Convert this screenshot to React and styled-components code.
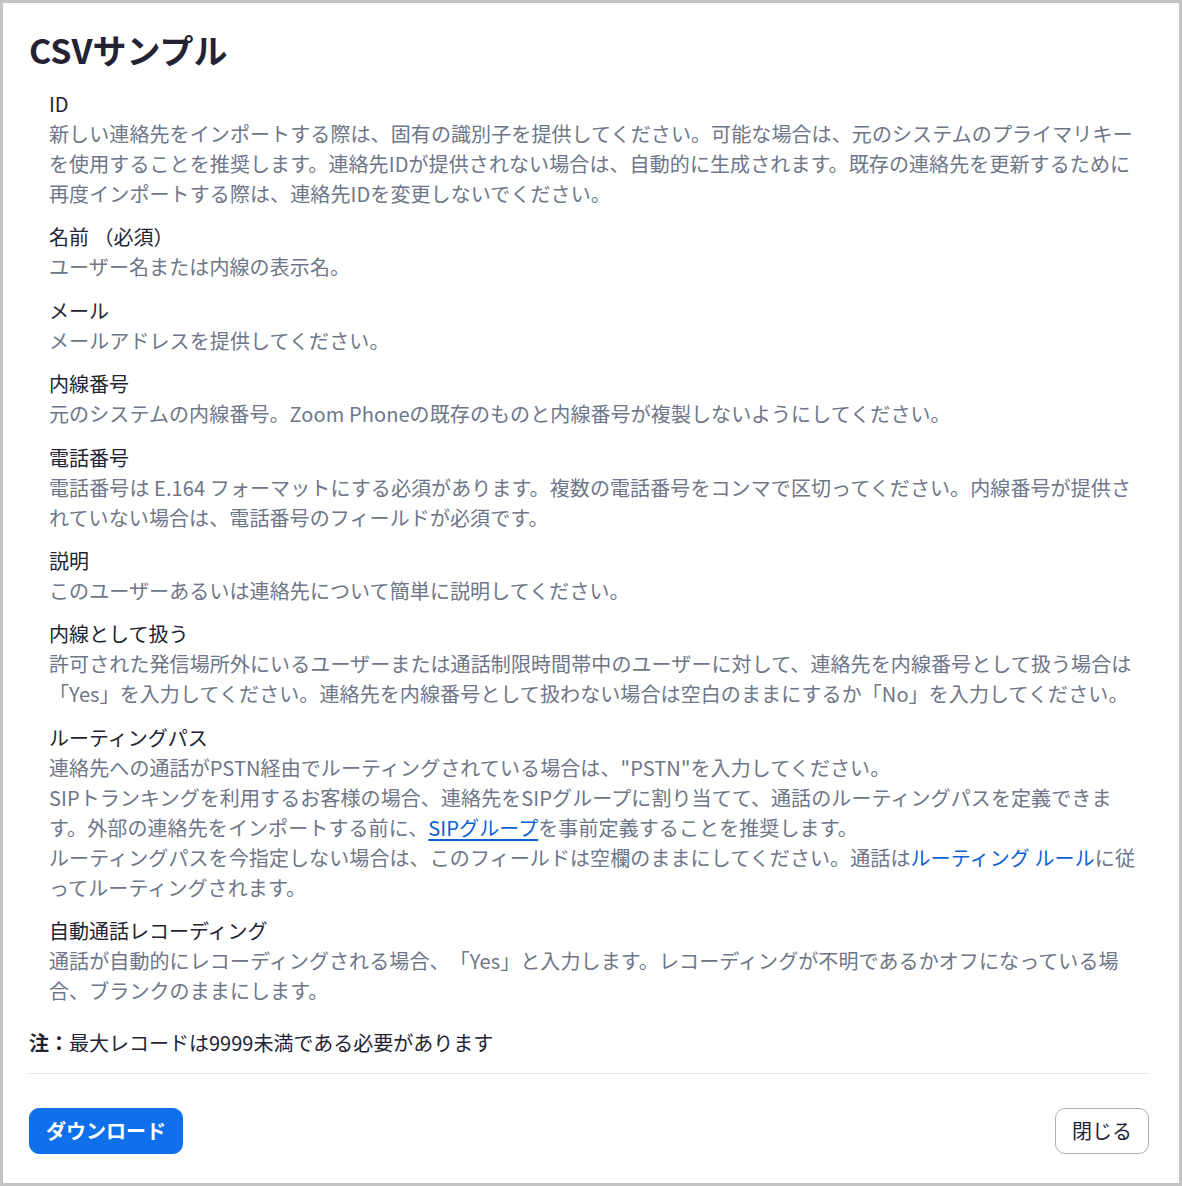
import styled, { createGlobalStyle } from "styled-components";

const GlobalStyle = createGlobalStyle`
  html, body {
    margin: 0;
    padding: 0;
    background: #fff;
  }
  body {
    font-family: "Noto Sans CJK JP", "Noto Sans", sans-serif;
    -webkit-font-smoothing: antialiased;
    text-spacing-trim: space-all;
  }
`;

const Dialog = styled.div`
  box-sizing: border-box;
  width: 1182px;
  height: 1186px;
  border: 3px solid #c3c3c3;
  padding: 23px 30px 0 26px;
  display: flex;
  flex-direction: column;
  color: #232333;
`;

const Title = styled.h2`
  margin: 0;
  font-size: 34px;
  line-height: 48px;
  font-weight: 700;
  color: #232333;
`;

const FieldList = styled.div`
  display: flex;
  flex-direction: column;
  gap: 13.4px;
  margin-top: 15px;
  padding: 0 6px 0 20px;
`;

const Field = styled.div`
  display: flex;
  flex-direction: column;
`;

const Label = styled.div`
  font-size: 20px;
  line-height: 30px;
  color: #232333;
`;

const Desc = styled.div`
  font-size: 20px;
  line-height: 30px;
  letter-spacing: 0.1px;
  color: #6e7687;
`;

const Link = styled.a`
  color: #0e62cf;
  text-decoration: ${({ $underline }) => ($underline ? "underline" : "none")};
  text-underline-offset: 3px;
  cursor: pointer;
`;

const Note = styled.p`
  margin: 22px 0 0;
  font-size: 20px;
  line-height: 30px;
  color: #232333;

  strong {
    font-weight: 700;
  }
`;

const Divider = styled.hr`
  border: none;
  border-top: 1px solid #e4e4ea;
  margin: 15px 0 0;
`;

const Footer = styled.div`
  display: flex;
  justify-content: space-between;
  align-items: center;
  margin-top: 34px;
`;

const Button = styled.button`
  box-sizing: border-box;
  height: 46px;
  padding: 0 16px;
  border-radius: 10px;
  font-family: inherit;
  font-size: 20px;
  line-height: 1;
  cursor: pointer;
  border: 1px solid ${({ $primary }) => ($primary ? "#0e71eb" : "#b0b0bd")};
  background: ${({ $primary }) => ($primary ? "#0e71eb" : "#fff")};
  color: ${({ $primary }) => ($primary ? "#fff" : "#232333")};
  font-weight: ${({ $primary }) => ($primary ? 700 : 400)};
`;

const fields = [
  {
    label: "ID",
    desc: "新しい連絡先をインポートする際は、固有の識別子を提供してください。可能な場合は、元のシステムのプライマリキーを使用することを推奨します。連絡先IDが提供されない場合は、自動的に生成されます。既存の連絡先を更新するために再度インポートする際は、連絡先IDを変更しないでください。",
  },
  { label: "名前 （必須）", desc: "ユーザー名または内線の表示名。" },
  { label: "メール", desc: "メールアドレスを提供してください。" },
  {
    label: "内線番号",
    desc: "元のシステムの内線番号。Zoom Phoneの既存のものと内線番号が複製しないようにしてください。",
  },
  {
    label: "電話番号",
    desc: "電話番号は E.164 フォーマットにする必須があります。複数の電話番号をコンマで区切ってください。内線番号が提供されていない場合は、電話番号のフィールドが必須です。",
  },
  { label: "説明", desc: "このユーザーあるいは連絡先について簡単に説明してください。" },
  {
    label: "内線として扱う",
    desc: "許可された発信場所外にいるユーザーまたは通話制限時間帯中のユーザーに対して、連絡先を内線番号として扱う場合は「Yes」を入力してください。連絡先を内線番号として扱わない場合は空白のままにするか「No」を入力してください。",
  },
  {
    label: "ルーティングパス",
    desc: (
      <>
        <div>連絡先への通話がPSTN経由でルーティングされている場合は、"PSTN"を入力してください。</div>
        <div>
          SIPトランキングを利用するお客様の場合、連絡先をSIPグループに割り当てて、通話のルーティングパスを定義できます。外部の連絡先をインポートする前に、
          <Link $underline>SIPグループ</Link>を事前定義することを推奨します。
        </div>
        <div>
          ルーティングパスを今指定しない場合は、このフィールドは空欄のままにしてください。通話は
          <Link>ルーティング ルール</Link>に従ってルーティングされます。
        </div>
      </>
    ),
  },
  {
    label: "自動通話レコーディング",
    desc: "通話が自動的にレコーディングされる場合、「Yes」と入力します。レコーディングが不明であるかオフになっている場合、ブランクのままにします。",
  },
];

export default function App() {
  return (
    <>
      <GlobalStyle />
      <Dialog>
        <Title>CSVサンプル</Title>
        <FieldList>
          {fields.map((f) => (
            <Field key={f.label}>
              <Label>{f.label}</Label>
              <Desc>{f.desc}</Desc>
            </Field>
          ))}
        </FieldList>
        <Note>
          <strong>注：</strong>最大レコードは9999未満である必要があります
        </Note>
        <Divider />
        <Footer>
          <Button $primary>ダウンロード</Button>
          <Button>閉じる</Button>
        </Footer>
      </Dialog>
    </>
  );
}
